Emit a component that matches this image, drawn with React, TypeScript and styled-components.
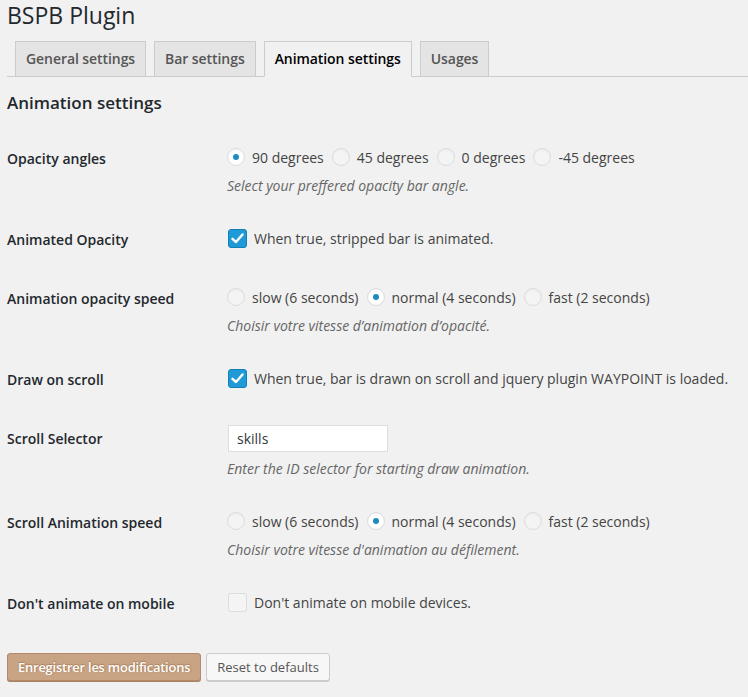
import React from "react";
import styled, { createGlobalStyle } from "styled-components";

const Global = createGlobalStyle`
  html, body { margin: 0; padding: 0; background: #f1f1f1; }
  body { font-family: "Open Sans", "Noto Sans", sans-serif; color: #444; font-size: 13px; }
  * { box-sizing: border-box; }
`;

const Page = styled.div`
  padding: 0 0 0 7px;
  width: 748px;
  height: 697px;
  overflow: hidden;
`;

const Title = styled.h1`
  margin: 0 0 10px;
  font-size: 23px;
  line-height: 31px;
  font-weight: 400;
  color: #23282d;
`;

const TabBar = styled.nav`
  display: flex;
  gap: 8px;
  padding-left: 8px;
  border-bottom: 1px solid #ccc;
  height: 36px;
`;

const Tab = styled.div<{ $active?: boolean }>`
  height: 36px;
  padding: 0 10px;
  border: 1px solid #ccc;
  border-bottom-color: ${(p) => (p.$active ? "#f1f1f1" : "#ccc")};
  background: ${(p) => (p.$active ? "#f1f1f1" : "#e4e4e4")};
  color: ${(p) => (p.$active ? "#000" : "#555")};
  font-size: 14px;
  font-weight: 600;
  letter-spacing: -0.07px;
  line-height: 34px;
  white-space: nowrap;
`;

const Heading = styled.h2`
  margin: 15px 0 15px;
  font-size: 17px;
  line-height: 22px;
  font-weight: 600;
  color: #23282d;
`;

const Table = styled.div`
  display: flex;
  flex-direction: column;
`;

const Row = styled.div`
  display: flex;
  align-items: flex-start;
`;

const Th = styled.div`
  width: 210px;
  flex: none;
  padding: 20px 10px 20px 0;
  font-size: 14px;
  font-weight: 600;
  line-height: 19px;
  color: #23282d;
`;

const Td = styled.div`
  padding: 15px 10px;
  display: flex;
  flex-direction: column;
`;

const Options = styled.div`
  display: flex;
  align-items: center;
  height: 26px;
  gap: 8px;
`;

const Option = styled.label`
  display: flex;
  align-items: center;
  gap: 7px;
  font-size: 14px;
  color: #444;
  white-space: nowrap;
`;

const Radio = styled.span<{ $on?: boolean }>`
  width: 18px;
  height: 18px;
  border-radius: 50%;
  border: 1px solid #dcdcdc;
  background: ${(p) => (p.$on ? "#fff" : "rgba(255,255,255,0.25)")};
  box-shadow: inset 0 1px 2px rgba(0, 0, 0, 0.05);
  display: flex;
  align-items: center;
  justify-content: center;
  flex: none;
  &::after {
    content: "";
    display: ${(p) => (p.$on ? "block" : "none")};
    width: 6px;
    height: 6px;
    border-radius: 50%;
    background: #1e8cbe;
  }
`;

const Box = styled.span<{ $on?: boolean }>`
  width: 19px;
  height: 19px;
  border-radius: 3px;
  flex: none;
  margin-left: 1px;
  border: 1px solid ${(p) => (p.$on ? "#1280b8" : "#dcdcdc")};
  background: ${(p) => (p.$on ? "#1e9ad6" : "rgba(255,255,255,0.25)")};
  display: flex;
  align-items: center;
  justify-content: center;
`;

const Desc = styled.p<{ $top?: number }>`
  margin: ${(p) => p.$top ?? 6}px 0 0;
  font-size: 14px;
  line-height: 19px;
  font-style: italic;
  color: #666;
  white-space: nowrap;
`;

const TextInput = styled.input`
  width: 160px;
  height: 27px;
  margin: 1px 0 0 1px;
  padding: 3px 8px;
  border: 1px solid #ddd;
  background: #fff;
  font-family: inherit;
  font-size: 14px;
  color: #32373c;
  outline: none;
`;

const Submit = styled.div`
  display: flex;
  gap: 5px;
  margin-top: 20px;
`;

const Button = styled.button<{ $primary?: boolean }>`
  height: 28px;
  padding: 0 10px;
  border-radius: 3px;
  font-family: inherit;
  font-size: 13px;
  line-height: 26px;
  font-weight: ${(p) => (p.$primary ? 600 : 400)};
  letter-spacing: ${(p) => (p.$primary ? "-0.25px" : "0")};
  border: 1px solid ${(p) => (p.$primary ? "#b4896a" : "#ccc")};
  background: ${(p) => (p.$primary ? "#c8a384" : "#f7f7f7")};
  color: ${(p) => (p.$primary ? "#fff" : "#555")};
  text-shadow: ${(p) => (p.$primary ? "0 -1px 1px #a8805f, 1px 0 1px #a8805f" : "none")};
  box-shadow: ${(p) => (p.$primary ? "0 1px 0 #a8805f" : "0 1px 0 #ccc")};
`;

const Check = () => (
  <svg width="13" height="11" viewBox="0 0 13 11">
    <path d="M1.5 5.8 L5 9 L11.5 1.5" fill="none" stroke="#fff" strokeWidth="2.4" strokeLinecap="round" strokeLinejoin="round" />
  </svg>
);

type Opt = { label: string; on?: boolean };

const RadioGroup = ({ options }: { options: Opt[] }) => (
  <Options>
    {options.map((o) => (
      <Option key={o.label}>
        <Radio $on={o.on} />
        {o.label}
      </Option>
    ))}
  </Options>
);

const CheckRow = ({ on, label }: { on?: boolean; label: string }) => (
  <Options>
    <Option>
      <Box $on={on}>{on && <Check />}</Box>
      {label}
    </Option>
  </Options>
);

const speeds = (sel: string): Opt[] => [
  { label: "slow (6 seconds)", on: sel === "slow" },
  { label: "normal (4 seconds)", on: sel === "normal" },
  { label: "fast (2 seconds)", on: sel === "fast" },
];

export default function App() {
  return (
    <Page>
      <Global />
      <Title>BSPB Plugin</Title>
      <TabBar>
        <Tab>General settings</Tab>
        <Tab>Bar settings</Tab>
        <Tab $active>Animation settings</Tab>
        <Tab>Usages</Tab>
      </TabBar>
      <Heading>Animation settings</Heading>
      <Table>
        <Row>
          <Th>Opacity angles</Th>
          <Td>
            <RadioGroup
              options={[
                { label: "90 degrees", on: true },
                { label: "45 degrees" },
                { label: "0 degrees" },
                { label: "-45 degrees" },
              ]}
            />
            <Desc>Select your preffered opacity bar angle.</Desc>
          </Td>
        </Row>
        <Row>
          <Th>Animated Opacity</Th>
          <Td>
            <CheckRow on label="When true, stripped bar is animated." />
          </Td>
        </Row>
        <Row>
          <Th>Animation opacity speed</Th>
          <Td>
            <RadioGroup options={speeds("normal")} />
            <Desc>Choisir votre vitesse d’animation d’opacité.</Desc>
          </Td>
        </Row>
        <Row>
          <Th>Draw on scroll</Th>
          <Td>
            <CheckRow on label="When true, bar is drawn on scroll and jquery plugin WAYPOINT is loaded." />
          </Td>
        </Row>
        <Row>
          <Th>Scroll Selector</Th>
          <Td>
            <TextInput defaultValue="skills" />
            <Desc $top={7}>Enter the ID selector for starting draw animation.</Desc>
          </Td>
        </Row>
        <Row>
          <Th>Scroll Animation speed</Th>
          <Td>
            <RadioGroup options={speeds("normal")} />
            <Desc>Choisir votre vitesse d'animation au défilement.</Desc>
          </Td>
        </Row>
        <Row>
          <Th>Don't animate on mobile</Th>
          <Td>
            <CheckRow label="Don't animate on mobile devices." />
          </Td>
        </Row>
      </Table>
      <Submit>
        <Button $primary>Enregistrer les modifications</Button>
        <Button>Reset to defaults</Button>
      </Submit>
    </Page>
  );
}
